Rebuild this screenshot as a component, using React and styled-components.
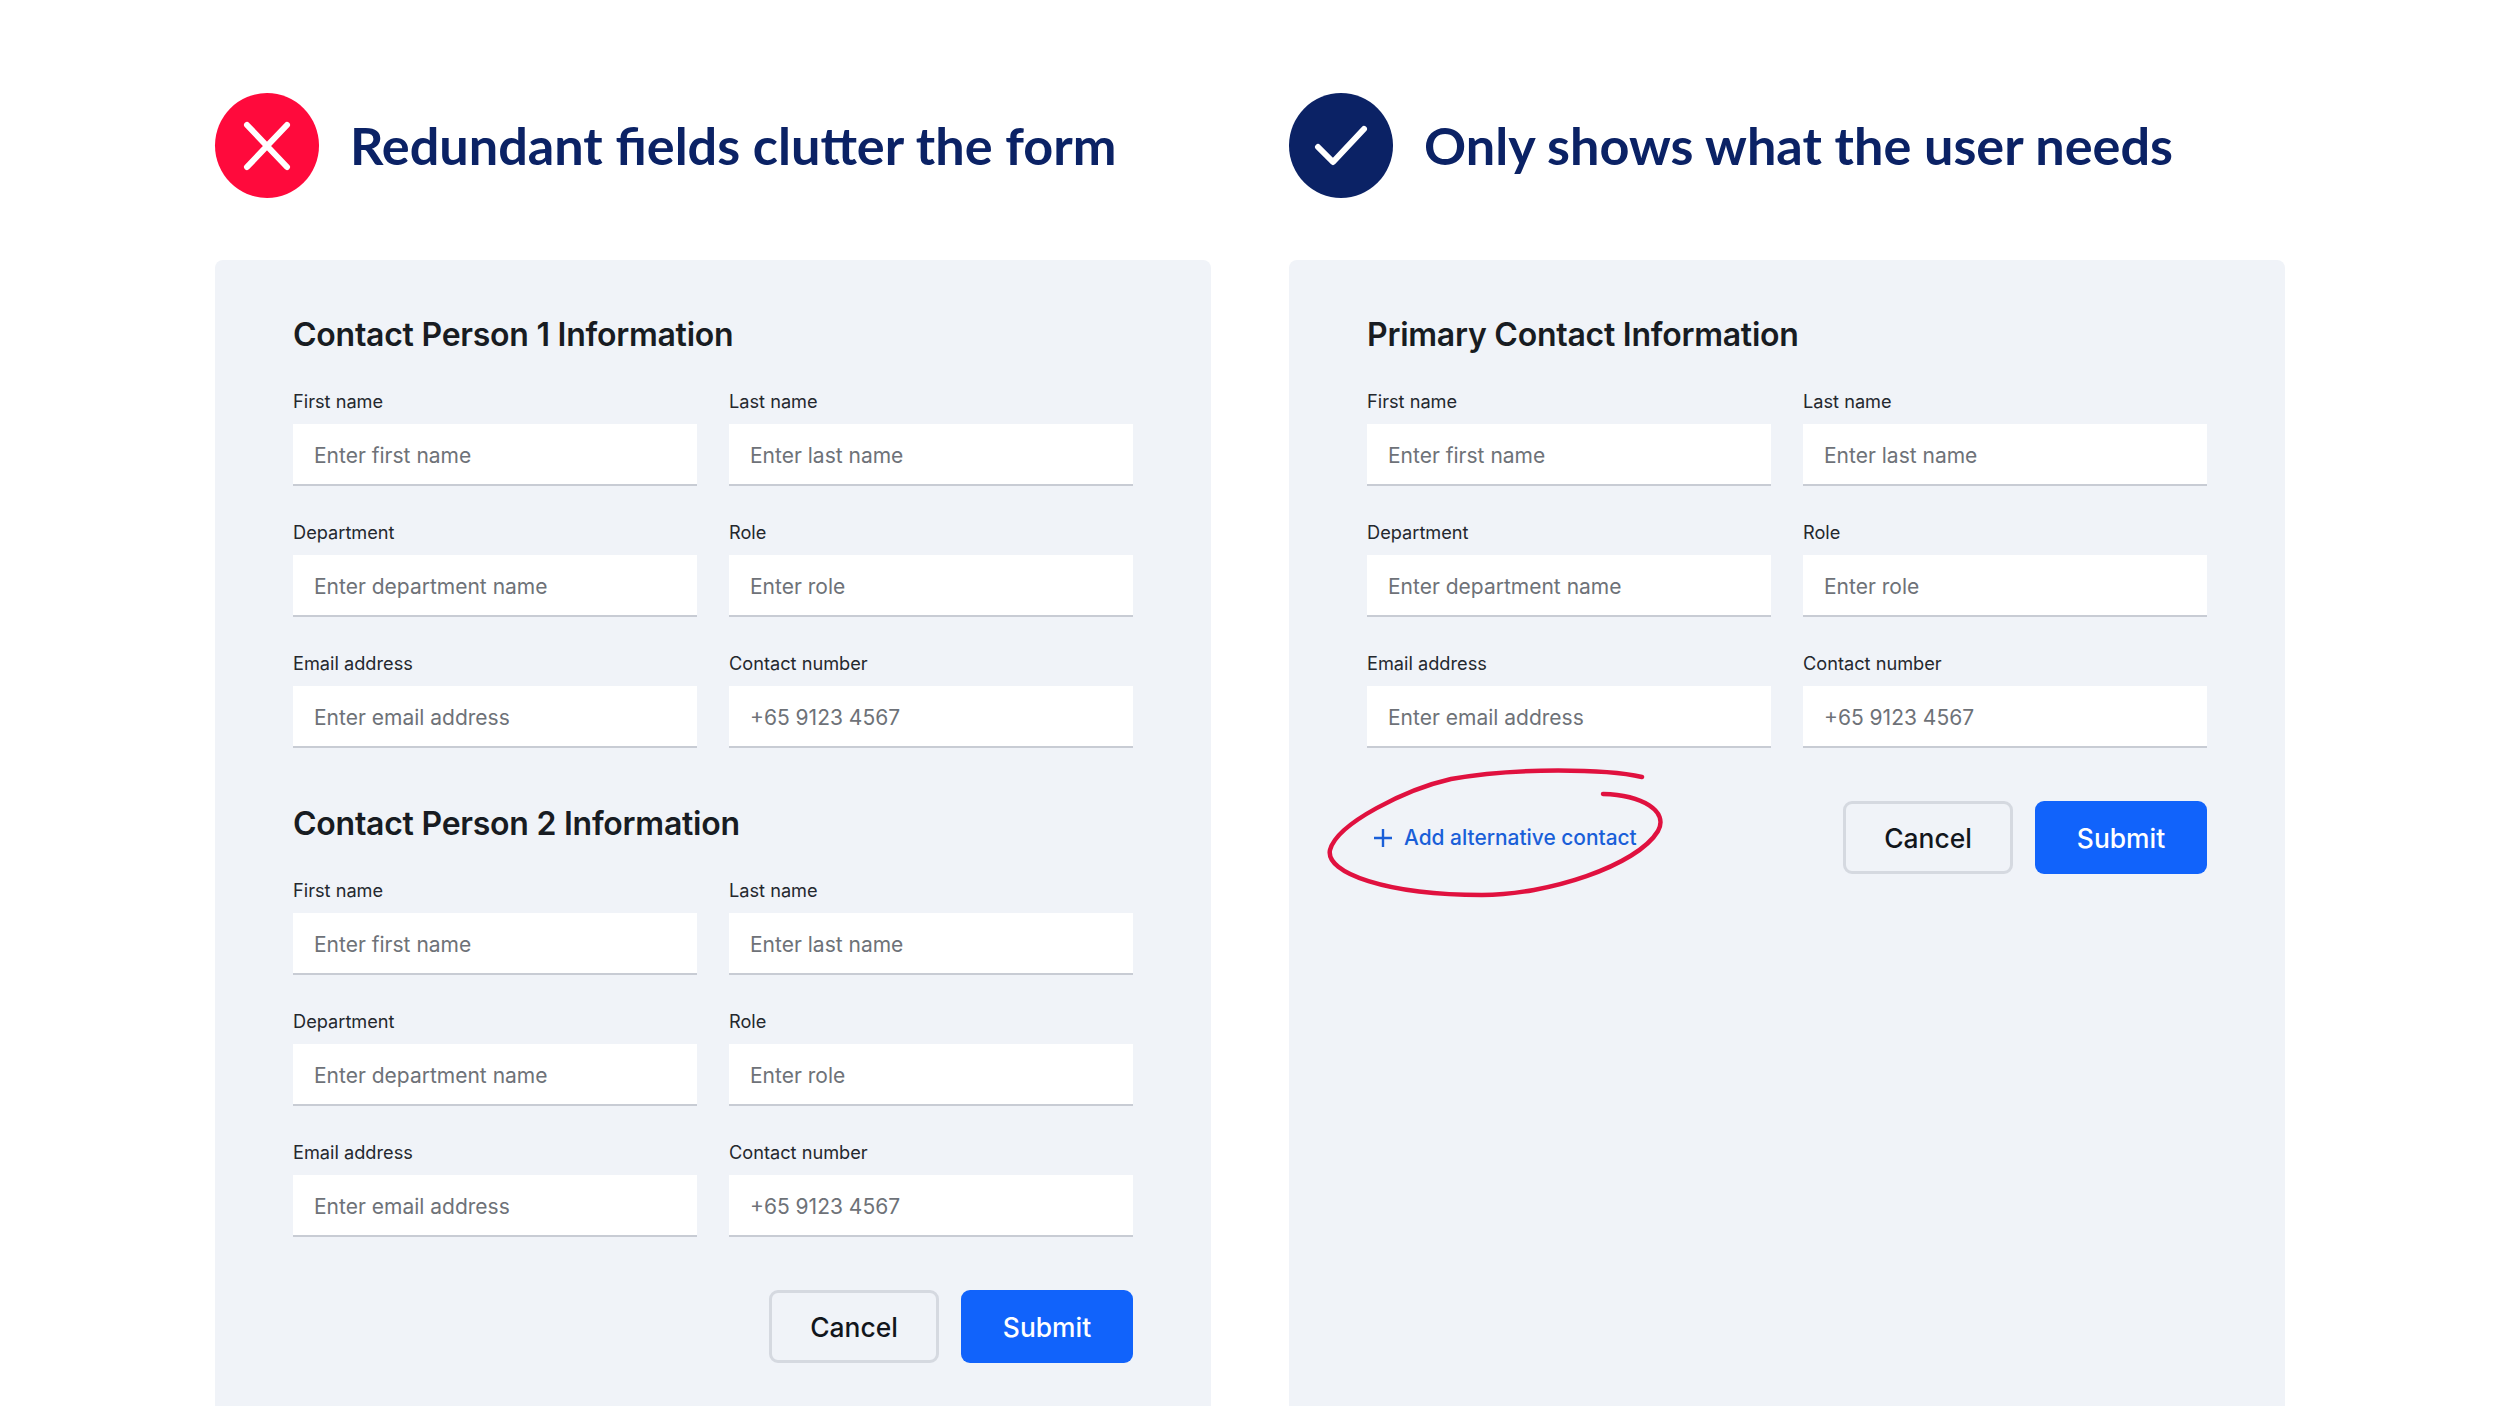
import styled, { createGlobalStyle } from 'styled-components';

const GlobalStyle = createGlobalStyle`
  html, body {
    margin: 0;
    padding: 0;
    background: #fff;
  }
  * {
    box-sizing: border-box;
  }
`;

const Page = styled.div`
  display: flex;
  gap: 78px;
  width: 100%;
  height: 100vh;
  padding: 93px 0 0 215px;
  overflow: hidden;
  font-family: Inter, 'Liberation Sans', sans-serif;
`;

const Column = styled.section`
  display: flex;
  flex-direction: column;
  flex: 0 0 996px;
  gap: 62px;
`;

const Header = styled.header`
  display: flex;
  align-items: center;
  gap: 31px;
  height: 105px;
`;

const Badge = styled.div`
  display: flex;
  align-items: center;
  justify-content: center;
  width: 104px;
  height: 105px;
  border-radius: 50%;
  background: ${(p) => (p.$good ? '#0b2265' : '#ff0a3c')};
  flex-shrink: 0;
`;

const Title = styled.h1`
  margin: 0;
  color: #0b2265;
  font-family: Lato, 'Liberation Sans', sans-serif;
  font-size: 52.2px;
  font-weight: 700;
  line-height: 1;
  white-space: nowrap;
`;

const Panel = styled.div`
  flex: 1;
  padding: 55px 78px 0;
  background: #f0f3f8;
  border-radius: 8px 8px 0 0;
`;

const Section = styled.div`
  & + & {
    margin-top: 56px;
  }
`;

const SectionTitle = styled.h2`
  margin: 0 0 34px;
  color: #181c22;
  font-size: 32px;
  font-weight: 600;
  letter-spacing: -0.25px;
  line-height: 40px;
  white-space: nowrap;
`;

const Grid = styled.div`
  display: grid;
  grid-template-columns: 404px 404px;
  column-gap: 32px;
  row-gap: 34px;
`;

const Field = styled.label`
  display: flex;
  flex-direction: column;
  gap: 11px;
`;

const FieldLabel = styled.span`
  color: #24282e;
  font-size: 18.2px;
  line-height: 24px;
`;

const Input = styled.input`
  width: 100%;
  height: 62px;
  padding: 3px 21px 0;
  border: 0;
  border-bottom: 2px solid #c8ccd4;
  border-radius: 0;
  outline: none;
  background: #fff;
  color: #24282e;
  font-family: inherit;
  font-size: 21px;

  &::placeholder {
    color: #6e7278;
    opacity: 1;
  }
`;

const Actions = styled.div`
  position: relative;
  display: flex;
  align-items: center;
  justify-content: ${(p) => (p.$split ? 'space-between' : 'flex-end')};
  margin-top: 53px;
`;

const Buttons = styled.div`
  display: flex;
  gap: 22px;
`;

const Button = styled.button`
  width: ${(p) => (p.$primary ? '172px' : '170px')};
  height: 73px;
  border: ${(p) => (p.$primary ? '0' : '3px solid #d5d9e0')};
  border-radius: 9px;
  background: ${(p) => (p.$primary ? '#1163fb' : 'transparent')};
  color: ${(p) => (p.$primary ? '#fff' : '#12161c')};
  font-family: inherit;
  font-size: 26.4px;
  font-weight: 500;
`;

const AddLink = styled.a`
  display: flex;
  align-items: center;
  gap: 12px;
  padding-left: 7px;
  color: #1a5fd8;
  font-size: 20.9px;
  font-weight: 500;
  white-space: nowrap;
`;

// hand drawn ring around the add link
const Scribble = styled.svg`
  position: absolute;
  left: -50px;
  top: -40px;
  width: 360px;
  height: 140px;
  overflow: visible;
  pointer-events: none;
`;

const contactFields = [
  ['First name', 'Enter first name'],
  ['Last name', 'Enter last name'],
  ['Department', 'Enter department name'],
  ['Role', 'Enter role'],
  ['Email address', 'Enter email address'],
  ['Contact number', '+65 9123 4567'],
];

const ContactSection = ({ title }) => (
  <Section>
    <SectionTitle>{title}</SectionTitle>
    <Grid>
      {contactFields.map(([label, placeholder]) => (
        <Field key={label}>
          <FieldLabel>{label}</FieldLabel>
          <Input type="text" placeholder={placeholder} />
        </Field>
      ))}
    </Grid>
  </Section>
);

const FormButtons = () => (
  <Buttons>
    <Button type="button">Cancel</Button>
    <Button type="button" $primary>
      Submit
    </Button>
  </Buttons>
);

const App = () => (
  <>
    <GlobalStyle />
    <Page>
      <Column>
        <Header>
          <Badge>
            <svg width="50" height="50" viewBox="0 0 50 50" fill="none">
              <path d="M5 4 L45 46 M45 4 L5 46" stroke="#fff" strokeWidth="6" strokeLinecap="round" />
            </svg>
          </Badge>
          <Title>Redundant fields clutter the form</Title>
        </Header>
        <Panel>
          <ContactSection title="Contact Person 1 Information" />
          <ContactSection title="Contact Person 2 Information" />
          <Actions>
            <FormButtons />
          </Actions>
        </Panel>
      </Column>
      <Column>
        <Header>
          <Badge $good>
            <svg width="54" height="44" viewBox="0 0 54 44" fill="none">
              <path d="M4 23 L19 38 L50 5" stroke="#fff" strokeWidth="6" strokeLinecap="round" strokeLinejoin="round" />
            </svg>
          </Badge>
          <Title>Only shows what the user needs</Title>
        </Header>
        <Panel>
          <ContactSection title="Primary Contact Information" />
          <Actions $split>
            <AddLink>
              <svg width="18" height="18" viewBox="0 0 18 18" fill="none">
                <path d="M9 0 V18 M0 9 H18" stroke="currentColor" strokeWidth="2.4" />
              </svg>
              Add alternative contact
            </AddLink>
            <Scribble viewBox="0 0 360 140" fill="none">
              <path
                d="M325 16 C290 8 200 6 134 18 C90 28 20 62 13 89 C8 112 70 134 165 134 C230 134 320 105 341 70 C352 50 325 34 286 33"
                stroke="#e0113f"
                strokeWidth="4.5"
                strokeLinecap="round"
              />
            </Scribble>
            <FormButtons />
          </Actions>
        </Panel>
      </Column>
    </Page>
  </>
);

export default App;
